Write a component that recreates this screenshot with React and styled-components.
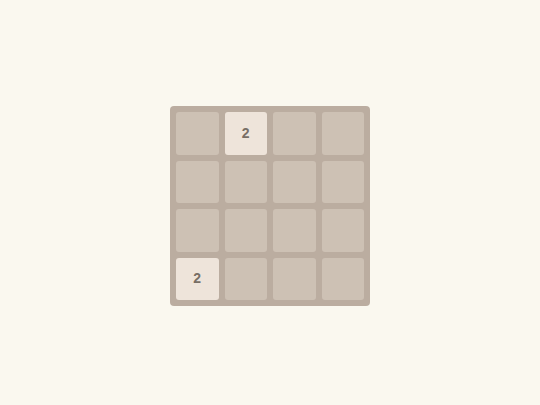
import styled, { createGlobalStyle } from "styled-components";

const board = [
  [0, 2, 0, 0],
  [0, 0, 0, 0],
  [0, 0, 0, 0],
  [2, 0, 0, 0],
];

function App() {
  return (
    <>
      <GlobalStyle />
      <Page>
        <Board>
          {board.flat().map((value, i) => (
            <Cell key={i} $filled={value > 0}>
              {value > 0 ? value : null}
            </Cell>
          ))}
        </Board>
      </Page>
    </>
  );
}

export default App;

const GlobalStyle = createGlobalStyle`
  html, body {
    margin: 0;
    padding: 0;
    background: #faf8ef;
  }
  body {
    font-family: "Liberation Sans", Arial, sans-serif;
  }
`;

const Page = styled.div`
  min-height: 405px;
  box-sizing: border-box;
  padding-top: 7px;
  display: flex;
  align-items: center;
  justify-content: center;
`;

const Board = styled.div`
  width: 200px;
  height: 200px;
  box-sizing: border-box;
  padding: 6px;
  display: grid;
  grid-template-columns: repeat(4, 1fr);
  grid-template-rows: repeat(4, 1fr);
  gap: 6px;
  background: #bbada0;
  border-radius: 4px;
`;

const Cell = styled.div`
  display: flex;
  align-items: center;
  justify-content: center;
  padding-bottom: 1px;
  border-radius: 3px;
  background: ${(p) => (p.$filled ? "#eee4da" : "#cdc1b4")};
  color: #776e65;
  font-size: 14px;
  font-weight: 700;
`;
